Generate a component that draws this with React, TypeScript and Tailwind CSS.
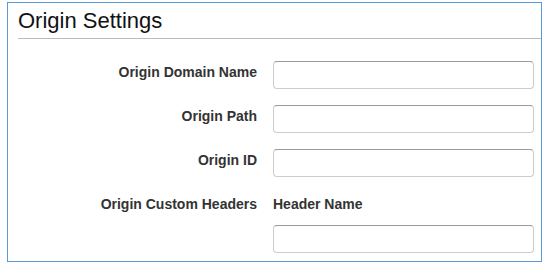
import React from "react";

const fields = ["Origin Domain Name", "Origin Path", "Origin ID"];

function TextBox() {
  return (
    <input
      type="text"
      className="block h-[28px] w-[261px] rounded-[4px] border border-[#cccccc] border-t-[#9a9a9a] bg-white px-2 text-[14px] outline-none"
    />
  );
}

export default function App() {
  return (
    <div className="bg-white pt-[2px] pl-[7px] font-['Liberation_Sans',Arial,sans-serif]">
      <div className="h-[260px] w-[535px] border border-[#5b9bd5]">
        <div className="ml-[10px] border-b border-[#bbbbbb] pt-[5px] pb-[5px]">
          <h2 className="text-[22px] leading-[25px] text-[#111111]">Origin Settings</h2>
        </div>

        <div className="mt-[22px] flex flex-col gap-[16px]">
          {fields.map((label) => (
            <div key={label} className="flex items-start gap-[16px]">
              <label className="w-[249px] pt-[3px] text-right text-[14px] font-bold leading-[16px] text-[#333333]">
                {label}
              </label>
              <TextBox />
            </div>
          ))}

          <div className="flex items-start gap-[16px]">
            <label className="w-[249px] pt-[3px] text-right text-[14px] font-bold leading-[16px] text-[#333333]">
              Origin Custom Headers
            </label>
            <div>
              <p className="pt-[3px] pb-[13px] text-[14px] font-bold leading-[16px] text-[#333333]">
                Header Name
              </p>
              <TextBox />
            </div>
          </div>
        </div>
      </div>
    </div>
  );
}
